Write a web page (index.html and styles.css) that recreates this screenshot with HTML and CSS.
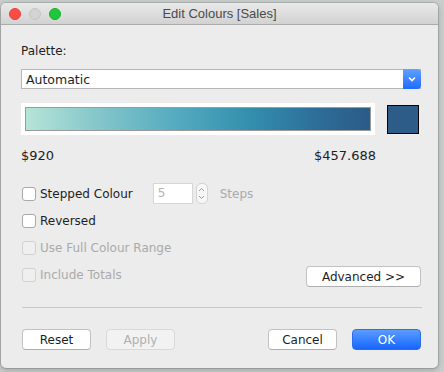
FILE: index.html
```html
<!DOCTYPE html>
<html lang="en">
<head>
    <meta charset="UTF-8">
    <meta name="viewport" content="width=device-width, initial-scale=1.0">
    <title>Edit Colours [Sales]</title>
    <link rel="stylesheet" href="styles.css">
</head>
<body>
    <div class="window">
        <div class="titlebar">
            <div class="lights">
                <span class="light red"></span>
                <span class="light grey"></span>
                <span class="light green"></span>
            </div>
            <div class="title">Edit Colours [Sales]</div>
        </div>
        <div class="content">
            <div class="label">Palette:</div>
            <div class="select">
                <span class="select-text">Automatic</span>
                <span class="select-arrow">
                    <svg width="10" height="6" viewBox="0 0 10 6"><path d="M2 1.5 L5 4.5 L8 1.5" fill="none" stroke="#fff" stroke-width="1.6"/></svg>
                </span>
            </div>
            <div class="ramp-row">
                <div class="ramp-frame"><div class="ramp"></div></div>
                <div class="swatch"></div>
            </div>
            <div class="range">
                <span>$920</span>
                <span>$457.688</span>
            </div>

            <div class="options">
                <div class="option">
                    <span class="check"></span>
                    <span class="opt-text">Stepped Colour</span>
                    <span class="steps-input">5</span>
                    <span class="stepper">
                        <svg width="7" height="17" viewBox="0 0 7 17"><path d="M1 6 L3.5 3.5 L6 6 M1 11 L3.5 13.5 L6 11" fill="none" stroke="#9a9a9a" stroke-width="1"/></svg>
                    </span>
                    <span class="steps-label">Steps</span>
                </div>
                <div class="option">
                    <span class="check"></span>
                    <span class="opt-text">Reversed</span>
                </div>
                <div class="option disabled">
                    <span class="check"></span>
                    <span class="opt-text">Use Full Colour Range</span>
                </div>
                <div class="option disabled">
                    <span class="check"></span>
                    <span class="opt-text">Include Totals</span>
                    <button class="btn advanced">Advanced &gt;&gt;</button>
                </div>
            </div>

            <hr class="separator">

            <div class="footer">
                <button class="btn">Reset</button>
                <button class="btn" disabled>Apply</button>
                <span class="spacer"></span>
                <button class="btn">Cancel</button>
                <button class="btn primary">OK</button>
            </div>
        </div>
    </div>
</body>
</html>
```

FILE: styles.css
```css
body {
    margin: 0;
    padding: 3px 0 0 1px;
    background: #c9cdcc;
    font-family: "DejaVu Sans", Arial, sans-serif;
    font-size: 12px;
    color: #1e1e1e;
    height: 369px;
    overflow: hidden;
}
.window {
    width: 437px;
    height: 365px;
    background: #ececec;
    border-radius: 5px;
    box-shadow: 0 0 0 1px rgba(0, 0, 0, 0.12), 0 2px 6px rgba(0, 0, 0, 0.2);
    overflow: hidden;
}
.titlebar {
    height: 21px;
    position: relative;
    background: linear-gradient(#e9e9e9, #d2d2d2);
    border-bottom: 1px solid #ababab;
    display: flex;
    align-items: center;
    justify-content: center;
}
.lights {
    position: absolute;
    left: 8px;
    top: 5px;
    display: flex;
    gap: 8px;
}
.light {
    width: 12px;
    height: 12px;
    border-radius: 50%;
    box-sizing: border-box;
}
.red {
    background: #fc4b45;
    border: 1px solid #e0443e;
}
.grey {
    background: #d3d3d3;
    border: 1px solid #c4c4c4;
}
.green {
    background: #1fc73a;
    border: 1px solid #14b12c;
}
.title {
    font-family: "Liberation Sans", Arial, sans-serif;
    font-size: 13px;
    color: #4a4a4a;
}
.content {
    padding: 18px 17px 0 20px;
}
.label {
    height: 16px;
    line-height: 16px;
}
.select {
    margin-top: 10px;
    height: 20px;
    box-sizing: border-box;
    background: #fff;
    border: 1px solid #b6b6b6;
    display: flex;
    align-items: center;
}
.select-text {
    flex: 1;
    padding-left: 4px;
    font-size: 12.5px;
}
.select-arrow {
    width: 18px;
    height: 20px;
    margin: -1px -1px -1px 0;
    border-radius: 0 4px 4px 0;
    background: linear-gradient(#5fa1ff, #1f6bff);
    display: flex;
    align-items: center;
    justify-content: center;
}
.ramp-row {
    margin-top: 14px;
    display: flex;
    align-items: center;
}
.ramp-frame {
    width: 354px;
    height: 32px;
    background: #fff;
    padding: 4px;
    box-sizing: border-box;
}
.ramp {
    height: 100%;
    box-sizing: border-box;
    border: 1px solid #9a9a9a;
    background: linear-gradient(to right, #b6e4d8 0%, #86c7cb 20%, #52a9bf 45%, #338fae 65%, #2d6d97 85%, #2b5b87 100%);
}
.swatch {
    width: 32px;
    height: 29px;
    margin-left: 12px;
    box-sizing: border-box;
    background: #2d5c89;
    border: 1px solid #000;
}
.range {
    width: 355px;
    margin-top: 13px;
    display: flex;
    justify-content: space-between;
    font-size: 13px;
    line-height: 16px;
}
.options {
    margin-top: 16px;
}
.option {
    height: 27px;
    display: flex;
    align-items: center;
}
.check {
    width: 14px;
    height: 14px;
    box-sizing: border-box;
    background: #fff;
    border: 1px solid #a9a9a9;
    border-radius: 3px;
    margin-left: 1px;
}
.opt-text {
    margin-left: 4px;
}
.disabled .check {
    background: #efefef;
    border-color: #d2d2d2;
}
.disabled .opt-text,
.steps-label {
    color: #aaaaaa;
}
.steps-input {
    width: 40px;
    height: 21px;
    box-sizing: border-box;
    margin-left: 20px;
    background: #fff;
    border: 1px solid #d6d6d6;
    color: #b4b4b4;
    padding-left: 4px;
    line-height: 19px;
}
.stepper {
    width: 12px;
    height: 21px;
    margin-left: 3px;
    box-sizing: border-box;
    border: 1px solid #d4d4d4;
    border-radius: 5px;
    background: #f6f6f6;
    display: flex;
    align-items: center;
    justify-content: center;
}
.steps-label {
    margin-left: 12px;
}
.btn {
    height: 21px;
    padding: 0;
    width: 69px;
    box-sizing: border-box;
    background: #fff;
    border: 1px solid #c2c2c2;
    border-bottom-color: #aeaeae;
    border-radius: 4px;
    font-family: "DejaVu Sans", Arial, sans-serif;
    font-size: 12px;
    color: #1e1e1e;
}
.btn:disabled {
    background: #f2f2f2;
    border-color: #d9d9d9;
    color: #b0b0b0;
}
.advanced {
    width: 115px;
    margin-left: auto;
    margin-top: 4px;
}
.primary {
    background: linear-gradient(#5b9cff, #1766ff);
    border-color: #2a6ef0;
    color: #fff;
}
.separator {
    margin: 19px 0 0 1px;
    width: 400px;
    border: 0;
    border-top: 1px solid #c8c8c8;
}
.footer {
    margin-top: 21px;
    display: flex;
    gap: 15px;
    padding-left: 1px;
}
.spacer {
    flex: 1;
}
```
